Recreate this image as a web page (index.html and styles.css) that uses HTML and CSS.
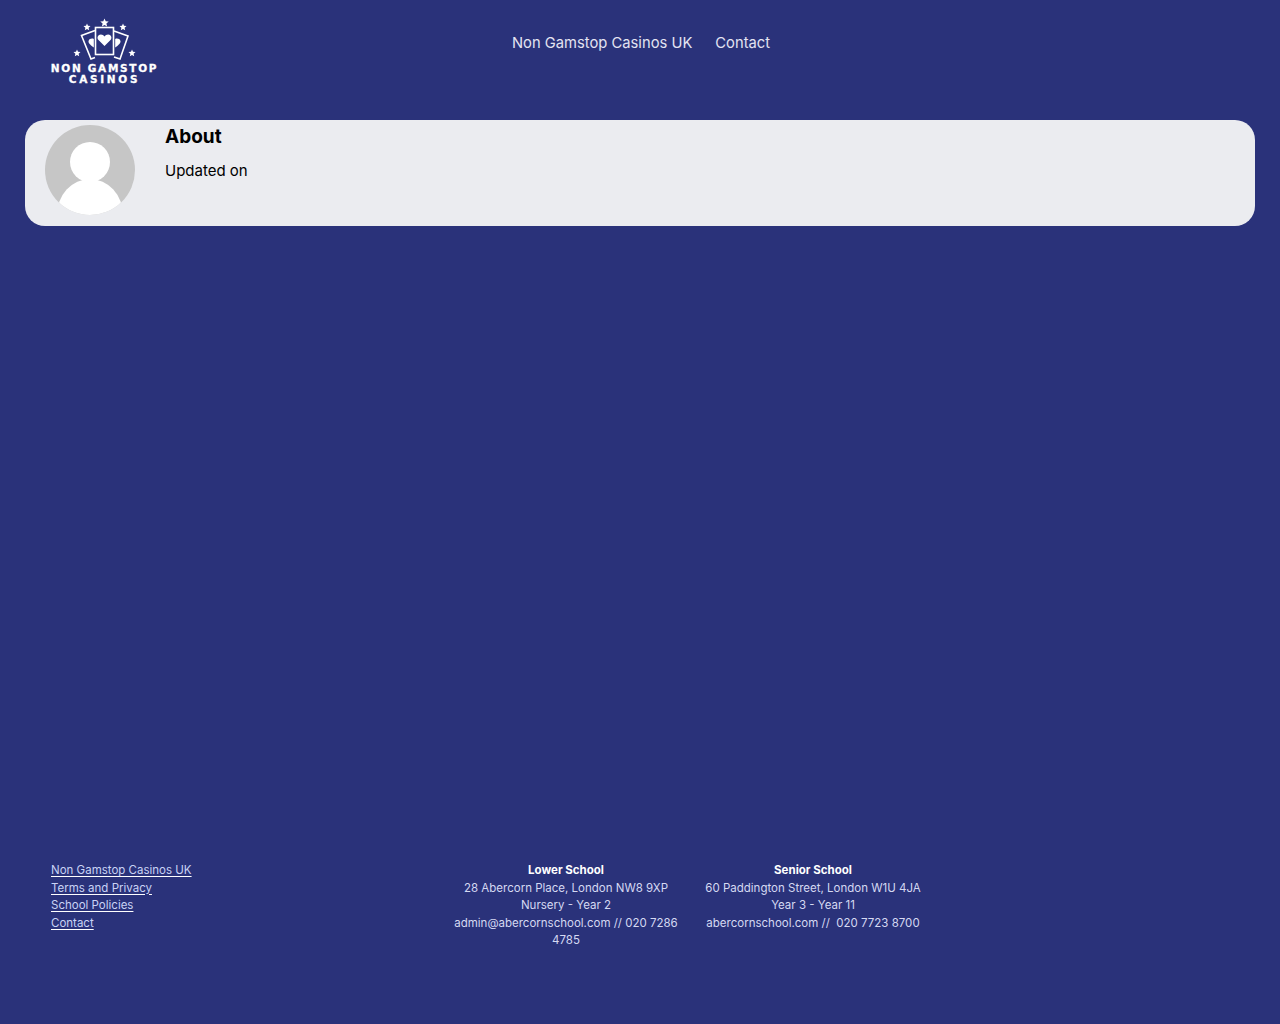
FILE: index.html
```html
<!DOCTYPE html>
<html lang="en">
<head>
<meta charset="utf-8">
<title>About</title>
<link rel="stylesheet" href="styles.css">
</head>
<body>
<header class="site-header">
  <a class="logo" href="#">
    <svg class="logo-mark" viewBox="0 0 68 45" width="68" height="45" aria-hidden="true">
      <g fill="#fff">
        <path d="M33.500 0.500l1.200 2.800 3 .3-2.300 2 .7 3-2.600-1.600-2.600 1.600.7-3-2.300-2 3-.3z"/>
        <path d="M16 5.500l1 2.300 2.500.2-1.900 1.700.6 2.500-2.200-1.300-2.200 1.300.6-2.500-1.900-1.700 2.500-.2z"/>
        <path d="M52 5.500l1 2.300 2.500.2-1.900 1.700.6 2.500-2.200-1.300-2.200 1.300.6-2.500-1.900-1.700 2.500-.2z"/>
        <path d="M6 31.500l1 2.300 2.500.2-1.900 1.700.6 2.500-2.200-1.300-2.200 1.300.6-2.500-1.900-1.700 2.500-.2z"/>
        <path d="M61 31.500l1 2.300 2.500.2-1.900 1.700.6 2.500-2.200-1.300-2.200 1.300.6-2.500-1.900-1.700 2.500-.2z"/>
      </g>
      <g fill="none" stroke="#fff" stroke-width="1.600">
        <path d="M24 12.500L10.500 17.500l9.500 23.500 4-1.500"/>
        <path d="M43 13l14 5-8 23-6-2"/>
        <rect x="24.500" y="9.500" width="18" height="27"/>
      </g>
      <path fill="#fff" d="M33.500 28l-6-6c-2-2.200-.6-5.500 2.400-5.500 1.500 0 2.800.8 3.600 2 .8-1.200 2.100-2 3.600-2 3 0 4.400 3.300 2.400 5.500z"/>
      <path fill="#fff" d="M22.800 21c-1.700-.9-4.600-.4-5.200 1.800-.5 1.900 1 3.700 5.200 6.700z"/>
      <path fill="#fff" d="M44.200 21c1.700-.9 4.600-.4 5.200 1.800.5 1.900-1 3.700-5.200 6.700z"/>
    </svg>
    <span class="logo-text">NON GAMSTOP<br><span class="logo-sub">CASINOS</span></span>
  </a>
  <nav class="main-nav">
    <a href="#">Non Gamstop Casinos UK</a>
    <a href="#">Contact</a>
  </nav>
</header>

<main class="content">
  <section class="author-card">
    <svg class="avatar" viewBox="0 0 90 90" width="90" height="90" aria-hidden="true">
      <defs><clipPath id="avatar-clip"><circle cx="45" cy="45" r="45"/></clipPath></defs>
      <circle cx="45" cy="45" r="45" fill="#c6c6c6"/>
      <g clip-path="url(#avatar-clip)" fill="#fff">
        <circle cx="45" cy="37" r="20"/>
        <ellipse cx="45" cy="90" rx="33" ry="36"/>
      </g>
    </svg>
    <div class="author-text">
      <h1>About</h1>
      <p>Updated on</p>
    </div>
  </section>
</main>

<footer class="site-footer">
  <ul class="footer-links">
    <li><a href="#">Non Gamstop Casinos UK</a></li>
    <li><a href="#">Terms and Privacy</a></li>
    <li><a href="#">School Policies</a></li>
    <li><a href="#">Contact</a></li>
  </ul>
  <div class="school">
    <strong>Lower School</strong><br>
    28 Abercorn Place, London NW8 9XP<br>
    Nursery - Year 2<br>
    admin@abercornschool.com // 020 7286 4785
  </div>
  <div class="school">
    <strong>Senior School</strong><br>
    60 Paddington Street, London W1U 4JA<br>
    Year 3 - Year 11<br>
    abercornschool.com //&nbsp; 020 7723 8700
  </div>
</footer>
</body>
</html>
```

FILE: styles.css
```css
* { box-sizing: border-box; }
html, body { height: 100%; }
body {
  margin: 0;
  min-height: 1024px;
  display: flex;
  flex-direction: column;
  background: #2a327a;
  color: #fff;
  font-family: "Inter", "Liberation Sans", sans-serif;
}
a { color: inherit; }

.site-header {
  height: 120px;
  display: grid;
  grid-template-columns: 482px 1fr;
  padding-left: 30px;
}
.logo {
  display: flex;
  flex-direction: column;
  align-items: center;
  width: 107px;
  margin-left: 21px;
  padding-top: 18px;
  text-decoration: none;
}
.logo-mark { display: block; }
.logo-text {
  font-family: "DejaVu Sans", sans-serif;
  font-weight: 700;
  font-size: 10.500px;
  line-height: 11px;
  letter-spacing: 1.700px;
  -webkit-text-stroke: 0.300px #fff;
  text-align: center;
  white-space: nowrap;
}
.logo-sub { letter-spacing: 2.700px; }
.main-nav {
  display: flex;
  gap: 23px;
  padding-top: 34px;
  font-size: 14.750px;
  line-height: 18px;
  color: #e4e4f2;
}
.main-nav a { text-decoration: none; }

.content { flex: 1; padding: 0 25px; }
.author-card {
  display: flex;
  gap: 30px;
  height: 106px;
  padding: 5px 20px;
  background: #ebecf0;
  border-radius: 20px;
  color: #000;
}
.avatar { display: block; flex: none; }
.author-text h1 {
  margin: 0;
  font-size: 19px;
  line-height: 24px;
  font-weight: 700;
}
.author-text p {
  margin: 13px 0 0;
  font-size: 15px;
  line-height: 18px;
}

.site-footer {
  display: grid;
  grid-template-columns: 383px 230px 230px;
  column-gap: 17px;
  align-items: start;
  height: 162px;
  padding-left: 51px;
  font-size: 11.500px;
  line-height: 17.500px;
  color: #d5d9f2;
}
.footer-links {
  list-style: none;
  margin: 0;
  padding: 0;
  color: #c9d2f5;
}
.footer-links a {
  text-decoration-color: #fff;
  text-underline-offset: 2px;
}
.school { text-align: center; }
.school strong { color: #fff; font-weight: 700; }
```
